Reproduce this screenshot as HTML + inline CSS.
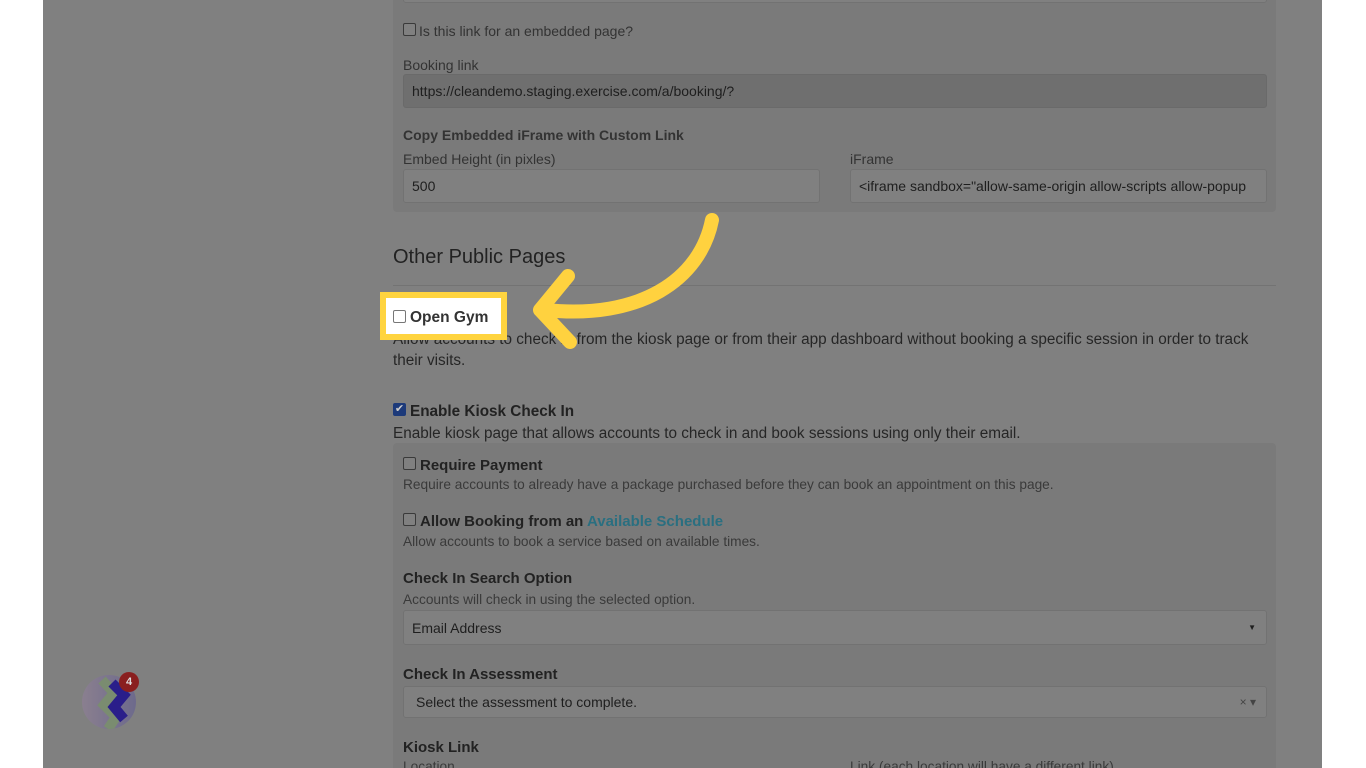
<!DOCTYPE html>
<html style="overflow:hidden;height:768px"><head><meta charset="utf-8"><style>
body{margin:0;width:1366px;height:768px;overflow:hidden;background:#fff;font-family:"Liberation Sans",Arial,sans-serif;position:relative}
.pg{position:absolute;left:43px;top:0;width:1279px;height:768px;background:#808080}
.a{position:absolute;white-space:nowrap}
.panel{position:absolute;left:393px;width:883px;background:#7a7a7a;border-radius:4px}
.inp{position:absolute;background:#808080;border:1px solid #727272;border-radius:3px;box-sizing:border-box;font-size:14px;color:#1e1e1e;padding-left:8px;display:flex;align-items:center}
.cb{position:absolute;width:11px;height:11px;border:1px solid #3a3a3a;border-radius:2px;background:#808080}
.lbl{font-size:14px;color:#333}
.h{font-size:15px;font-weight:bold;color:#222}
.sm{font-size:13.7px;color:#3a3a3a}
</style></head><body>
<div class="pg"></div>
<div class="panel" style="top:-10px;height:222px"></div>
<div class="inp" style="left:403px;top:-10px;width:864px;height:13px"></div>
<div class="cb" style="left:403px;top:23px"></div>
<div class="a lbl" style="left:419px;top:23px;font-size:14px">Is this link for an embedded page?</div>
<div class="a lbl" style="left:403px;top:57px">Booking link</div>
<div class="inp" style="left:403px;top:74px;width:864px;height:34px;background:#6f6f6f;border-color:#6a6a6a">https://cleandemo.staging.exercise.com/a/booking/?</div>
<div class="a" style="left:403px;top:127px;font-size:14px;font-weight:bold;color:#333">Copy Embedded iFrame with Custom Link</div>
<div class="a lbl" style="left:403px;top:151px">Embed Height (in pixles)</div>
<div class="inp" style="left:403px;top:169px;width:417px;height:34px">500</div>
<div class="a lbl" style="left:850px;top:151px">iFrame</div>
<div class="inp" style="left:850px;top:169px;width:417px;height:34px;overflow:hidden">&lt;iframe sandbox="allow-same-origin allow-scripts allow-popup</div>
<div class="a" style="left:393px;top:246px;font-size:20px;color:#222">Other Public Pages</div>
<div style="position:absolute;left:393px;top:285px;width:883px;height:1px;background:#737373"></div>
<div class="a" style="left:393px;top:331px;font-size:15.3px;color:#262626">Allow accounts to check in from the kiosk page or from their app dashboard without booking a specific session in order to track</div>
<div class="a" style="left:393px;top:352px;font-size:15.3px;color:#262626">their visits.</div>
<div style="position:absolute;left:380px;top:292px;width:115px;height:36px;border:6px solid #ffd43f;background:#fff"></div>
<div class="cb" style="left:393px;top:310px;background:#fff;border-color:#777"></div>
<div class="a" style="left:410px;top:309px;font-size:15.5px;font-weight:bold;color:#333">Open Gym</div>
<svg style="position:absolute;left:0;top:0" width="1366" height="768"><g fill="none" stroke="#ffd23f" stroke-width="14" stroke-linecap="round" stroke-linejoin="round"><path d="M712 220 C700 280 640 320 545 310"/><path d="M568 276 L540 310 L570 342"/></g></svg>
<div style="position:absolute;left:393px;top:403px;width:13px;height:13px;background:#1d3a7a;border-radius:2px;color:#ccc;font-size:11px;line-height:13px;text-align:center">✔</div>
<div class="a" style="left:410px;top:403px;font-size:15.3px;font-weight:bold;color:#222">Enable Kiosk Check In</div>
<div class="a" style="left:393px;top:425px;font-size:15.3px;color:#262626">Enable kiosk page that allows accounts to check in and book sessions using only their email.</div>
<div class="panel" style="top:443px;height:325px;border-radius:4px 4px 0 0"></div>
<div class="cb" style="left:403px;top:457px"></div>
<div class="a h" style="left:420px;top:457px">Require Payment</div>
<div class="a sm" style="left:403px;top:477px">Require accounts to already have a package purchased before they can book an appointment on this page.</div>
<div class="cb" style="left:403px;top:513px"></div>
<div class="a h" style="left:420px;top:513px">Allow Booking from an <span style="color:#2a6f80">Available Schedule</span></div>
<div class="a sm" style="left:403px;top:534px">Allow accounts to book a service based on available times.</div>
<div class="a h" style="left:403px;top:570px">Check In Search Option</div>
<div class="a sm" style="left:403px;top:592px">Accounts will check in using the selected option.</div>
<div class="inp" style="left:403px;top:610px;width:864px;height:35px">Email Address<span style="position:absolute;right:10px;font-size:8px">▼</span></div>
<div class="a h" style="left:403px;top:666px">Check In Assessment</div>
<div class="inp" style="left:403px;top:686px;width:864px;height:32px;padding-left:12px">Select the assessment to complete.<span style="position:absolute;right:10px;font-size:12px;color:#444">× ▾</span></div>
<div class="a h" style="left:403px;top:739px">Kiosk Link</div>
<div class="a sm" style="left:403px;top:759px">Location</div>
<div class="a sm" style="left:850px;top:759px">Link (each location will have a different link)</div>
<div style="position:absolute;left:82px;top:675px;width:54px;height:54px;border-radius:50%;background:linear-gradient(90deg,#8a7f8f,#6d6a8c);overflow:hidden">
<svg width="54" height="54"><path d="M20 5 L32 18 L22 30 L34 42 L26 54" stroke="#7a8c70" stroke-width="10" fill="none"/><path d="M30 8 L42 20 L32 32 L42 44" stroke="#2a1e8a" stroke-width="10" fill="none"/></svg></div>
<div style="position:absolute;left:119px;top:672px;width:20px;height:20px;border-radius:50%;background:#8a1f1f;color:#ddd;font-size:11px;font-weight:bold;text-align:center;line-height:20px">4</div>
</body></html>
